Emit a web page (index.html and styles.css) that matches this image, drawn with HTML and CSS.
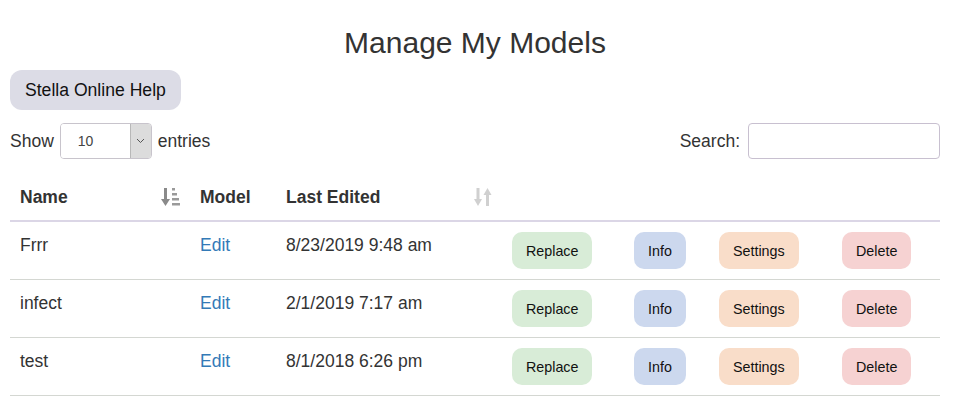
FILE: index.html
```html
<!DOCTYPE html>
<html>
<head>
<meta charset="utf-8">
<link rel="stylesheet" href="styles.css">
</head>
<body>
<div class="page">
  <h1 class="title">Manage My Models</h1>
  <button class="help-btn">Stella Online Help</button>
  <div class="controls">
    <label class="length">
      <span>Show</span>
      <span class="select-wrap">
        <select class="select"><option>10</option><option>25</option><option>50</option></select>
        <span class="select-arrow"><svg width="9" height="6" viewBox="0 0 9 6"><path d="M1 1 L4.5 4.5 L8 1" fill="none" stroke="#555" stroke-width="1"/></svg></span>
      </span>
      <span>entries</span>
    </label>
    <label class="search">
      <span>Search:</span>
      <input class="search-input" type="text">
    </label>
  </div>
  <table class="models">
    <colgroup>
      <col class="c-name"><col class="c-model"><col class="c-edited"><col class="c-replace"><col class="c-info"><col class="c-settings"><col class="c-delete">
    </colgroup>
    <thead>
      <tr>
        <th><div class="th-in"><span>Name</span>
          <svg class="sort sort-active" width="19" height="20" viewBox="0 0 19 20">
            <rect x="3" y="1" width="3" height="13" fill="#8a8a8a"/>
            <path d="M0 12 L9 12 L4.5 19 Z" fill="#8a8a8a"/>
            <rect x="11" y="1" width="3" height="2.5" fill="#9a9a9a"/>
            <rect x="11" y="6" width="5" height="2.5" fill="#9a9a9a"/>
            <rect x="11" y="11" width="7" height="2.5" fill="#9a9a9a"/>
            <rect x="11" y="16" width="8" height="2.5" fill="#9a9a9a"/>
          </svg></div></th>
        <th>Model</th>
        <th><div class="th-in"><span>Last Edited</span>
          <svg class="sort" width="18" height="20" viewBox="0 0 18 20">
            <rect x="2.5" y="1" width="3" height="13" fill="#d0d0d0"/>
            <path d="M0 12 L8 12 L4 19 Z" fill="#d0d0d0"/>
            <rect x="12" y="6" width="3" height="13" fill="#d0d0d0"/>
            <path d="M9.5 8 L17.5 8 L13.5 1 Z" fill="#d0d0d0"/>
          </svg></div></th>
        <th></th><th></th><th></th><th></th>
      </tr>
    </thead>
    <tbody>
      <tr>
        <td>Frrr</td><td><a class="edit" href="#">Edit</a></td><td>8/23/2019 9:48 am</td>
        <td><button class="act replace">Replace</button></td>
        <td><button class="act info">Info</button></td>
        <td><button class="act settings">Settings</button></td>
        <td><button class="act delete">Delete</button></td>
      </tr>
      <tr>
        <td>infect</td><td><a class="edit" href="#">Edit</a></td><td>2/1/2019 7:17 am</td>
        <td><button class="act replace">Replace</button></td>
        <td><button class="act info">Info</button></td>
        <td><button class="act settings">Settings</button></td>
        <td><button class="act delete">Delete</button></td>
      </tr>
      <tr>
        <td>test</td><td><a class="edit" href="#">Edit</a></td><td>8/1/2018 6:26 pm</td>
        <td><button class="act replace">Replace</button></td>
        <td><button class="act info">Info</button></td>
        <td><button class="act settings">Settings</button></td>
        <td><button class="act delete">Delete</button></td>
      </tr>
    </tbody>
  </table>
</div>
</body>
</html>
```
FILE: styles.css
```css
html, body {
  margin: 0;
  padding: 0;
  background: #fff;
}
body {
  font-family: "Liberation Sans", Arial, sans-serif;
  font-size: 17.5px;
  color: #333;
}
.page {
  width: 930px;
  margin: 0 10px;
}
.title {
  margin: 26px 0 11px;
  font-size: 30px;
  font-weight: normal;
  line-height: 33px;
  text-align: center;
  color: #333;
}
.help-btn {
  display: block;
  height: 40px;
  padding: 0 15px;
  border: none;
  border-radius: 12px;
  background: #dcdce6;
  color: #111;
  font-family: inherit;
  font-size: 17.6px;
}
.controls {
  margin-top: 13px;
  height: 36px;
  display: flex;
  justify-content: space-between;
  align-items: center;
}
.length, .search {
  display: flex;
  align-items: center;
}
.length {
  gap: 6px;
}
.search {
  gap: 8px;
}
.select-wrap {
  display: inline-flex;
  width: 92px;
  height: 36px;
  box-sizing: border-box;
  border: 1px solid #c8c4cc;
  border-radius: 4px;
  overflow: hidden;
}
.select {
  flex: 1;
  min-width: 0;
  border: none;
  outline: none;
  appearance: none;
  -webkit-appearance: none;
  background: #fff;
  padding: 0 0 0 17px;
  font-family: inherit;
  font-size: 14px;
  color: #444;
}
.select-arrow {
  width: 20px;
  display: flex;
  align-items: center;
  justify-content: center;
  background: #dcdcdc;
  border-left: 1px solid #b8b8b8;
}
.search-input {
  width: 192px;
  height: 36px;
  box-sizing: border-box;
  border: 1px solid #c8c0d0;
  border-radius: 4px;
  padding: 0 8px;
  font-family: inherit;
  font-size: 16px;
}
.models {
  margin-top: 15px;
  width: 930px;
  border-collapse: collapse;
  table-layout: fixed;
}
.c-name { width: 180px; }
.c-model { width: 86px; }
.c-edited { width: 226px; }
.c-replace { width: 122px; }
.c-info { width: 85px; }
.c-settings { width: 123px; }
.c-delete { width: 108px; }
.models th {
  text-align: left;
  font-weight: bold;
  padding: 10px;
  line-height: 26px;
  vertical-align: bottom;
  border-bottom: 2px solid #dbd6e6;
}
.th-in {
  display: flex;
  align-items: center;
  justify-content: space-between;
}
.sort {
  display: block;
}
.models td {
  padding: 10px;
  line-height: 26px;
  vertical-align: top;
  border-bottom: 1px solid #d4d7d2;
}
.edit {
  color: #337ab7;
  text-decoration: none;
}
.act {
  display: block;
  height: 37px;
  padding: 0 14px;
  border: none;
  border-radius: 10px;
  font-family: inherit;
  font-size: 14.3px;
  color: #111;
}
.replace { background: #d8ecd7; }
.info { background: #ccd8ee; }
.settings { background: #f9ddc9; }
.delete { background: #f6d2d2; }
```
